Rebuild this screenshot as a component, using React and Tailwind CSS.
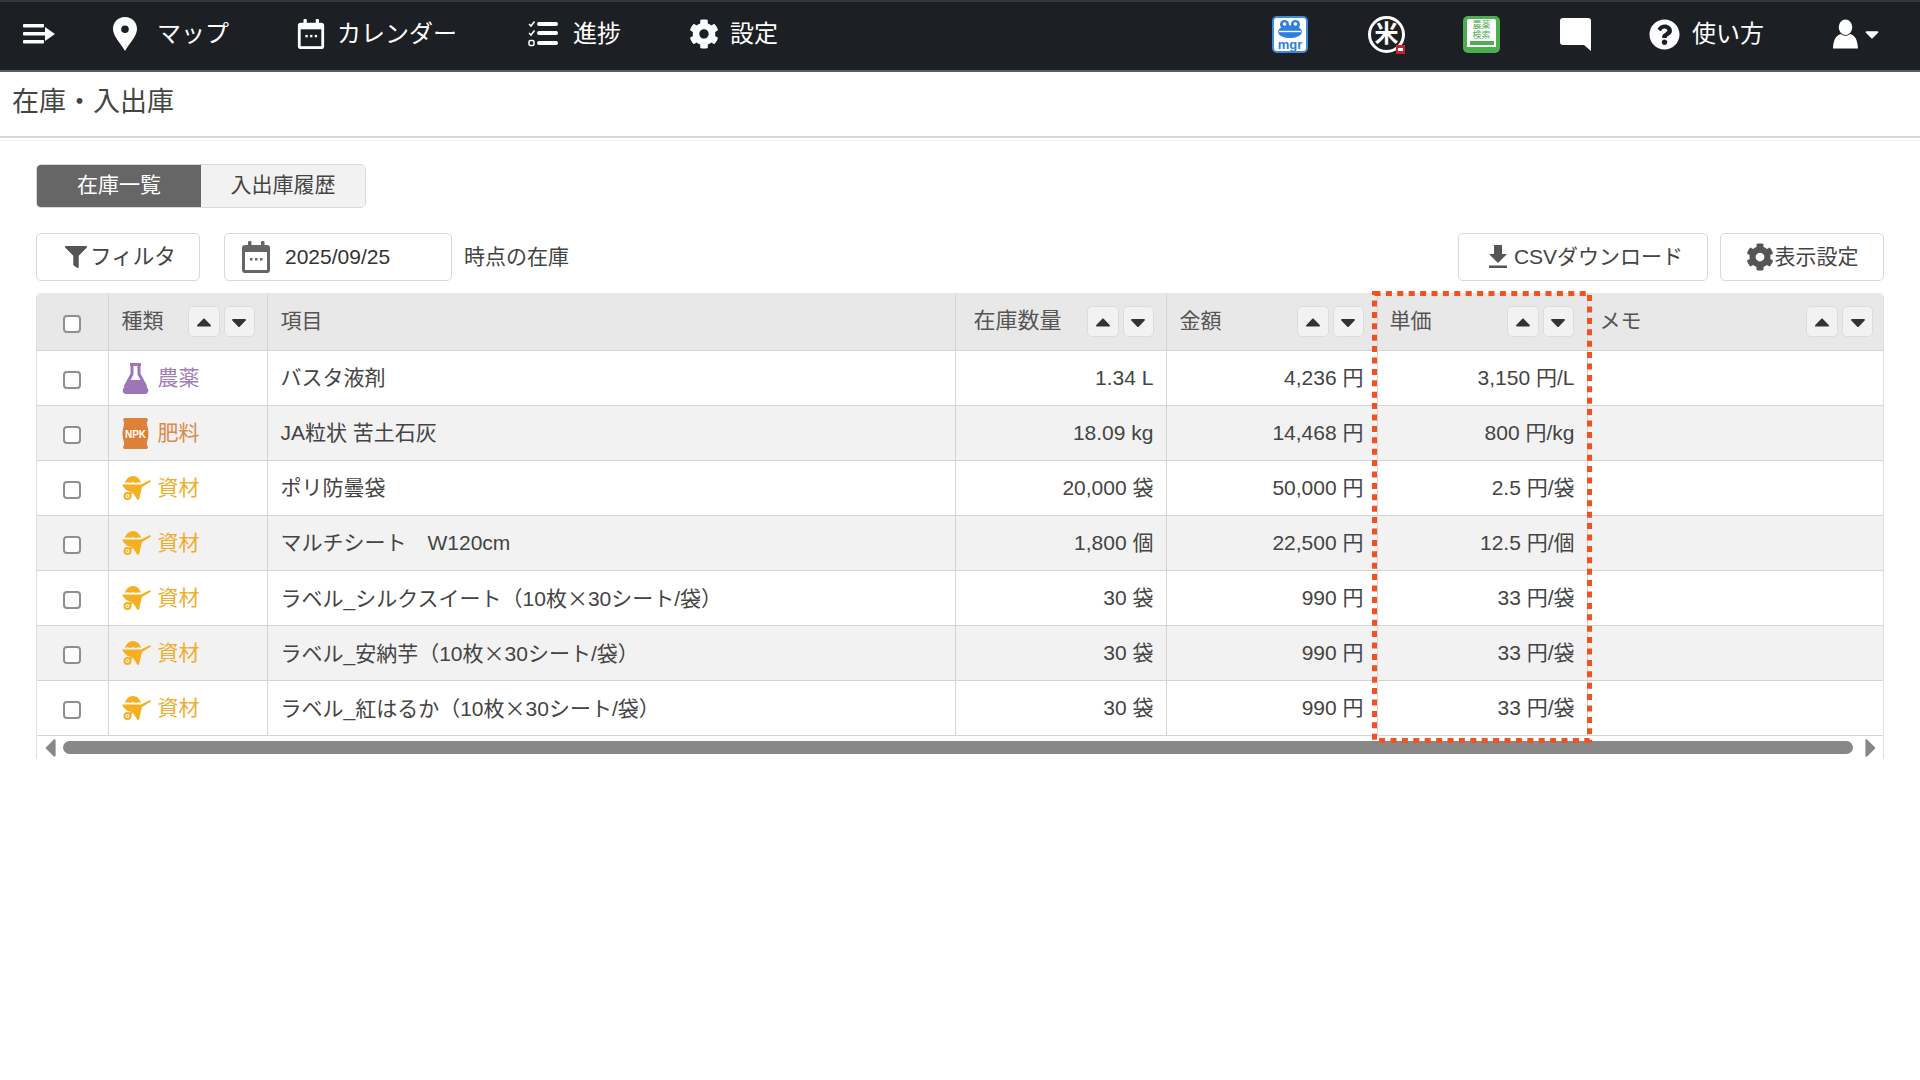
import { FaCog, FaFilter, FaQuestionCircle, FaCaretDown, FaCaretUp, FaCaretLeft, FaCaretRight } from "react-icons/fa";

const rows = [
  { kind: "農薬", name: "バスタ液剤", qty: "1.34 L", amount: "4,236 円", unit: "3,150 円/L" },
  { kind: "肥料", name: "JA粒状 苦土石灰", qty: "18.09 kg", amount: "14,468 円", unit: "800 円/kg" },
  { kind: "資材", name: "ポリ防曇袋", qty: "20,000 袋", amount: "50,000 円", unit: "2.5 円/袋" },
  { kind: "資材", name: "マルチシート　W120cm", qty: "1,800 個", amount: "22,500 円", unit: "12.5 円/個" },
  { kind: "資材", name: "ラベル_シルクスイート（10枚", tail: "30シート/袋）", qty: "30 袋", amount: "990 円", unit: "33 円/袋" },
  { kind: "資材", name: "ラベル_安納芋（10枚", tail: "30シート/袋）", qty: "30 袋", amount: "990 円", unit: "33 円/袋" },
  { kind: "資材", name: "ラベル_紅はるか（10枚", tail: "30シート/袋）", qty: "30 袋", amount: "990 円", unit: "33 円/袋" },
];

const kindColor = {
  農薬: "text-[#a27fbb]",
  肥料: "text-[#dd8a45]",
  資材: "text-[#f0ad2c]",
};

function MenuIcon() {
  return (
    <svg width="32" height="22" viewBox="0 0 32 22" fill="#fff">
      <rect x="0" y="1" width="21" height="3.500" rx="1" />
      <rect x="0" y="9" width="23" height="3.500" rx="1" />
      <rect x="0" y="17" width="21" height="3.500" rx="1" />
      <path d="M22 4 L32 11 L22 18 Z" />
    </svg>
  );
}

function PinIcon() {
  return (
    <svg width="26" height="34" viewBox="0 0 26 34">
      <path fill="#fff" fillRule="evenodd" d="M13 0C6 0 1 5.400 1 12c0 7 8 15 12 22 4-7 12-15 12-22C25 5.400 20 0 13 0zm0 8.500a3.800 3.800 0 1 1 0 7.600 3.800 3.800 0 0 1 0-7.600z" />
    </svg>
  );
}

function CalendarIcon({ color = "#fff", inner = "#1c2024", size = 30 }) {
  return (
    <svg width={size} height={size} viewBox="0 0 30 32">
      <rect x="1" y="4" width="28" height="28" rx="3" fill={color} />
      <rect x="7" y="0" width="3.500" height="7" rx="1" fill={color} />
      <rect x="20" y="0" width="3.500" height="7" rx="1" fill={color} />
      <rect x="4" y="11" width="22" height="18" fill={inner} />
      <rect x="9" y="17" width="2.500" height="2.500" fill={color} />
      <rect x="14" y="17" width="2.500" height="2.500" fill={color} />
      <rect x="19" y="17" width="2.500" height="2.500" fill={color} />
    </svg>
  );
}

function ListIcon() {
  return (
    <svg width="30" height="28" viewBox="0 0 30 28" fill="#fff">
      <path d="M1 4l2 2 3.500-4.500" stroke="#fff" strokeWidth="1.500" fill="none" />
      <path d="M1 13l2 2 3.500-4.500" stroke="#fff" strokeWidth="1.500" fill="none" />
      <rect x="1" y="20.500" width="5" height="5" rx="1.500" stroke="#fff" strokeWidth="1.500" fill="none" />
      <rect x="9" y="2" width="21" height="4" rx="2" />
      <rect x="9" y="11" width="21" height="4" rx="2" />
      <rect x="9" y="21" width="21" height="4" rx="2" />
    </svg>
  );
}

function UserIcon() {
  return (
    <svg width="25" height="30" viewBox="0 0 26 30" fill="#fff">
      <ellipse cx="13" cy="8" rx="7" ry="8" />
      <path d="M8 15c3 2.500 7 2.500 10 0 5 1.500 7.500 6 8 15H0c.5-9 3-13.500 8-15z" />
    </svg>
  );
}

function MgrLogo() {
  return (
    <div className="flex h-[37px] w-[36px] flex-col items-center rounded-[5px] border-2 border-[#3f8ae0] bg-white">
      <svg width="28" height="20" viewBox="0 0 28 22" className="mt-[1px]">
        <circle cx="8" cy="6" r="5" fill="#2f7fdc" />
        <circle cx="20" cy="6" r="5" fill="#2f7fdc" />
        <circle cx="8" cy="5.500" r="2" fill="#fff" />
        <circle cx="20" cy="5.500" r="2" fill="#fff" />
        <ellipse cx="14" cy="14" rx="13" ry="7" fill="#2f7fdc" />
        <rect x="2" y="13" width="24" height="1.500" fill="#fff" />
      </svg>
      <span className="text-[13px] leading-[12px] font-bold text-[#2f7fdc]">mgr</span>
    </div>
  );
}

function RiceLogo() {
  return (
    <div className="relative flex h-[37px] w-[37px] items-center justify-center rounded-full border-[3px] border-white">
      <span className="text-[24px] leading-none font-bold text-white">米</span>
      <span className="absolute right-[-3px] bottom-[-4px] flex h-[9px] w-[9px] items-center justify-center bg-[#c8202f]">
        <span className="h-[3px] w-[5px] bg-white"></span>
      </span>
    </div>
  );
}

function BookLogo() {
  return (
    <div className="flex h-[37px] w-[37px] items-start justify-center rounded-[5px] bg-[#4cae50] pt-[3px]">
      <div className="flex h-[28px] w-[29px] flex-col items-center rounded-t-[2px] bg-white pt-[1px]">
        <span className="text-[9px] leading-[10px] text-[#4cae50]">農薬</span>
        <span className="text-[9px] leading-[10px] text-[#4cae50]">検索</span>
        <span className="mt-[1px] h-[4px] w-[24px] bg-[#4cae50]"></span>
      </div>
    </div>
  );
}

function ChatIcon() {
  return (
    <svg width="31" height="33" viewBox="0 0 31 33">
      <path fill="#fff" d="M3 0h25a3 3 0 0 1 3 3v30l-7-6H3a3 3 0 0 1-3-3V3a3 3 0 0 1 3-3z" />
    </svg>
  );
}

function FlaskIcon() {
  return (
    <svg width="27" height="31" viewBox="0 0 27 31">
      <path fill="none" stroke="#9c76b6" strokeWidth="3" d="M8 1.500h11M10 2v9L3 24M17 2v9l7 13" />
      <path fill="#9c76b6" d="M6.500 17h14L26 26c1 2.500-.5 5-3 5H4c-2.500 0-4-2.500-3-5z" />
    </svg>
  );
}

function BagIcon() {
  return (
    <svg width="27" height="31" viewBox="0 0 27 31">
      <path fill="#dd8138" d="M2 0h23l1 2c-1 2-1.500 3-1 5 2 5 2 12 0 17-.5 2 0 3 1 5l-1 2H2l-1-2c1-2 1.500-3 1-5-2-5-2-12 0-17 .5-2 0-3-1-5z" />
      <text x="13.500" y="19.500" textAnchor="middle" fontSize="10" fontWeight="700" fill="#fff" fontFamily="Liberation Sans, sans-serif">NPK</text>
    </svg>
  );
}

function BarrowIcon() {
  return (
    <svg width="29" height="26" viewBox="0 0 29 26" fill="#f5b021">
      <path d="M3 8c1-4 4-7 8-7s7 3 8 7c-2-1-3-1-5 0-2-1-4-1-6 0-2-1-3-1-5 0z" />
      <path d="M0 9.500h19L28 5l1 1.500-9 5.500-3 12.500-1.500.5-5-8C6 17 2 14 0 9.500z" />
      <path d="M7 18l3-1.500 1 1.500-3 2.500z" />
      <circle cx="5.500" cy="21" r="3" fill="none" stroke="#f5b021" strokeWidth="2" />
      <circle cx="5.500" cy="21" r="1" />
    </svg>
  );
}

function KindIcon({ kind }) {
  if (kind === "農薬") return <FlaskIcon />;
  if (kind === "肥料") return <BagIcon />;
  return <BarrowIcon />;
}

function Check() {
  return <span className="mx-auto mt-[4px] block h-[18px] w-[18px] rounded-[4px] border-2 border-[#8f8f8f] bg-white"></span>;
}

function SortButtons() {
  return (
    <div className="flex shrink-0 gap-[4px]">
      <button className="flex h-[31px] w-[32px] items-center justify-center rounded-[5px] border border-[#dcdcdc] bg-[#f2f2f2] text-[#333]">
        <FaCaretUp size={24} />
      </button>
      <button className="flex h-[31px] w-[31px] items-center justify-center rounded-[5px] border border-[#dcdcdc] bg-[#f2f2f2] text-[#333]">
        <FaCaretDown size={24} />
      </button>
    </div>
  );
}

function HeadCell({ label, className }) {
  return (
    <th className="border-r border-b border-[#d4d4d4] p-0 font-normal last:border-r-0">
      <div className={`flex h-[57px] items-center justify-between ${className}`}>
        <span className="pb-[2px]">{label}</span>
        <SortButtons />
      </div>
    </th>
  );
}

export default function App() {
  return (
    <div className="h-[1080px] overflow-hidden bg-white font-['Liberation_Sans','Noto_Sans_CJK_JP',sans-serif] text-[21px] text-[#444]">
      {/* ナビ */}
      <nav className="flex h-[72px] items-center border-t-2 border-b-2 border-t-[#34383b] border-b-[#5a5d60] bg-[#1c2024] pb-[4px] text-[24px] text-white">
        <div className="ml-[23px]"><MenuIcon /></div>
        <div className="ml-[57px]"><PinIcon /></div>
        <span className="ml-[19px]">マップ</span>
        <div className="ml-[67px]"><CalendarIcon /></div>
        <span className="ml-[11px]">カレンダー</span>
        <div className="ml-[71px]"><ListIcon /></div>
        <span className="ml-[15px]">進捗</span>
        <FaCog size={30} className="ml-[68px]" />
        <span className="ml-[11px]">設定</span>
        <div className="ml-auto flex items-center pr-[37px]">
          <MgrLogo />
          <div className="ml-[60px]"><RiceLogo /></div>
          <div className="ml-[58px]"><BookLogo /></div>
          <div className="ml-[60px]"><ChatIcon /></div>
          <FaQuestionCircle size={31} className="ml-[58px]" />
          <span className="ml-[12px]">使い方</span>
          <div className="ml-[69px]"><UserIcon /></div>
          <FaCaretDown size={22} className="ml-[3px]" />
        </div>
      </nav>

      {/* タイトル */}
      <div className="h-[66px] border-b-2 border-[#d8d8d8]">
        <h1 className="pt-[12px] pl-[12px] text-[27px] leading-[36px] font-normal text-[#444]">在庫・入出庫</h1>
      </div>
      <div className="mt-[2px] h-[1px] bg-[#eeeeee]"></div>

      <div className="px-[36px] pt-[23px]">
        {/* タブ */}
        <div className="flex h-[44px] w-[330px] overflow-hidden rounded-[5px] border border-[#d8d8d8]">
          <div className="flex w-[164px] items-center justify-center bg-[#666666] pb-[2px] text-white">在庫一覧</div>
          <div className="flex flex-1 items-center justify-center bg-[#f2f2f2] pb-[2px]">入出庫履歴</div>
        </div>

        {/* ツールバー */}
        <div className="mt-[25px] flex h-[48px] items-stretch">
          <button className="flex w-[164px] items-center justify-center gap-[3px] rounded-[5px] border border-[#d8d8d8] bg-white pl-[5px] text-[21.600px]">
            <FaFilter size={22} className="text-[#555]" />
            <span>フィルタ</span>
          </button>
          <div className="ml-[24px] flex w-[228px] items-center rounded-[5px] border border-[#d8d8d8] bg-white pl-[15px]">
            <CalendarIcon color="#666" inner="#fff" size={32} />
            <span className="ml-[13px] text-[#333]">2025/09/25</span>
          </div>
          <span className="ml-[12px] self-center">時点の在庫</span>
          <button className="ml-auto flex w-[250px] items-center justify-center gap-[6px] rounded-[5px] border border-[#d8d8d8] bg-white pl-[5px]">
            <svg width="20" height="24" viewBox="0 0 20 24" fill="#555">
              <path d="M6 0h8v9h5l-9 9-9-9h5z" />
              <rect x="1" y="20.500" width="18" height="2.500" />
            </svg>
            <span>CSVダウンロード</span>
          </button>
          <button className="ml-[12px] flex w-[164px] items-center justify-center gap-[1px] rounded-[5px] border border-[#d8d8d8] bg-white">
            <FaCog size={28} className="text-[#555]" />
            <span>表示設定</span>
          </button>
        </div>

        {/* 在庫テーブル */}
        <div className="relative mt-[12px] w-[1848px]">
          <div className="overflow-hidden rounded-t-[5px] border-x border-[#dedede]">
            <table className="w-full table-fixed border-collapse">
              <colgroup>
                <col className="w-[71px]" />
                <col className="w-[159px]" />
                <col className="w-[688px]" />
                <col className="w-[211px]" />
                <col className="w-[211px]" />
                <col className="w-[210px]" />
                <col />
              </colgroup>
              <thead>
                <tr className="bg-[#e8e8e8] text-left text-[#555]">
                  <th className="border-r border-b border-[#d4d4d4] p-0"><Check /></th>
                  <HeadCell label="種類" className="pr-[12px] pl-[13px]" />
                  <th className="border-r border-b border-[#d4d4d4] pb-[2px] pl-[13px] font-normal">項目</th>
                  <HeadCell label="在庫数量" className="pr-[12px] pl-[18px] text-[22px]" />
                  <HeadCell label="金額" className="pr-[13px] pl-[13px]" />
                  <HeadCell label="単価" className="pr-[13px] pl-[12px]" />
                  <HeadCell label="メモ" className="pr-[10px] pl-[12px]" />
                </tr>
              </thead>
              <tbody>
                {rows.map((row, i) => (
                  <tr key={i} className={`h-[55px] ${i % 2 === 1 ? "bg-[#f2f2f2]" : "bg-white"}`}>
                    <td className="border-r border-b border-[#d4d4d4] p-0"><Check /></td>
                    <td className="border-r border-b border-[#d4d4d4] pl-[13px]">
                      <div className="flex items-center">
                        <div className="flex w-[36px] justify-start"><KindIcon kind={row.kind} /></div>
                        <span className={kindColor[row.kind]}>{row.kind}</span>
                      </div>
                    </td>
                    <td className="border-r border-b border-[#d4d4d4] pl-[13px] whitespace-nowrap">
                      {row.name}
                      {row.tail && <span className="font-['Noto_Sans_CJK_JP',sans-serif]">×</span>}
                      {row.tail}
                    </td>
                    <td className="border-r border-b border-[#d4d4d4] pr-[12px] text-right">{row.qty}</td>
                    <td className="border-r border-b border-[#d4d4d4] pr-[13px] text-right">{row.amount}</td>
                    <td className="border-r border-b border-[#d4d4d4] pr-[12px] text-right">{row.unit}</td>
                    <td className="border-b border-[#d4d4d4]"></td>
                  </tr>
                ))}
              </tbody>
            </table>

            {/* スクロールバー */}
            <div className="flex h-[23px] items-center text-[#888888]">
              <FaCaretLeft size={30} className="w-[26px]" />
              <div className="h-[13px] w-[1790px] rounded-full bg-[#888888]"></div>
              <FaCaretRight size={30} className="ml-[6px] w-[24px]" />
            </div>
          </div>

          {/* 単価列の強調枠 */}
          <svg className="absolute top-[-2px] left-[1336px]" width="220" height="452" viewBox="0 0 220 452" fill="none">
            <rect x="2.500" y="2.500" width="215" height="447" stroke="#f4511e" strokeWidth="5" strokeDasharray="6 5.400" />
          </svg>
        </div>
      </div>
    </div>
  );
}
